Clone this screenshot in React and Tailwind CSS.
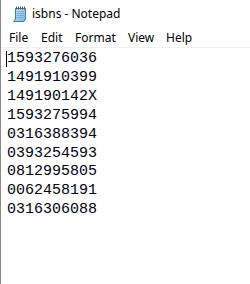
import React from "react";

const lines = [
  "1593276036",
  "1491910399",
  "149190142X",
  "1593275994",
  "0316388394",
  "0393254593",
  "0812995805",
  "0062458191",
  "0316306088",
];

function NotepadIcon() {
  return (
    <svg width="15" height="16" viewBox="0 0 15 16">
      <defs>
        <linearGradient id="pg" x1="0" y1="0" x2="1" y2="1">
          <stop offset="0" stopColor="#d6ecfb" />
          <stop offset="1" stopColor="#78b0de" />
        </linearGradient>
      </defs>
      <path d="M3.5 2.5 H13.5 V13 L12 15.5 H1.5 L3.5 13 Z" fill="url(#pg)" stroke="#3d7ab8" strokeWidth="1" />
      <path d="M4.5 5.5 H12 M4.5 7.5 H12 M4.5 9.5 H12 M4.5 11.5 H11" stroke="#6aa2d4" strokeWidth="0.8" />
      {[4.5, 6.5, 8.5, 10.5, 12.5].map((x) => (
        <rect key={x} x={x - 0.5} y="0.5" width="1" height="3" fill="#555" />
      ))}
    </svg>
  );
}

export default function App() {
  return (
    <div
      className="w-[250px] h-[284px] bg-white border-l border-[#8a8a8a] flex flex-col overflow-hidden"
      style={{ fontFamily: "'Noto Sans', 'Open Sans', sans-serif" }}
    >
      <div className="h-[28px] flex items-center pl-[11px] gap-[5px]">
        <NotepadIcon />
        <span className="text-[12px] text-black leading-none">isbns - Notepad</span>
      </div>
      <div className="h-[19px] flex items-center pl-[8px] text-[12px] text-black leading-none">
        <span className="w-[32px]">File</span>
        <span className="w-[34px]">Edit</span>
        <span className="w-[53px]">Format</span>
        <span className="w-[38px]">View</span>
        <span>Help</span>
      </div>
      <div className="h-[1px] bg-[#f0f0f0]" />
      <div
        className="relative pl-[6px] pt-[2px] text-[15px] leading-[18.9px] text-[#000010]"
        style={{ fontFamily: "'Liberation Mono', 'DejaVu Sans Mono', monospace" }}
      >
        <div className="absolute left-[5px] top-[3px] w-[1px] h-[16px] bg-black" />
        {lines.map((l) => (
          <div key={l}>{l}</div>
        ))}
      </div>
    </div>
  );
}
